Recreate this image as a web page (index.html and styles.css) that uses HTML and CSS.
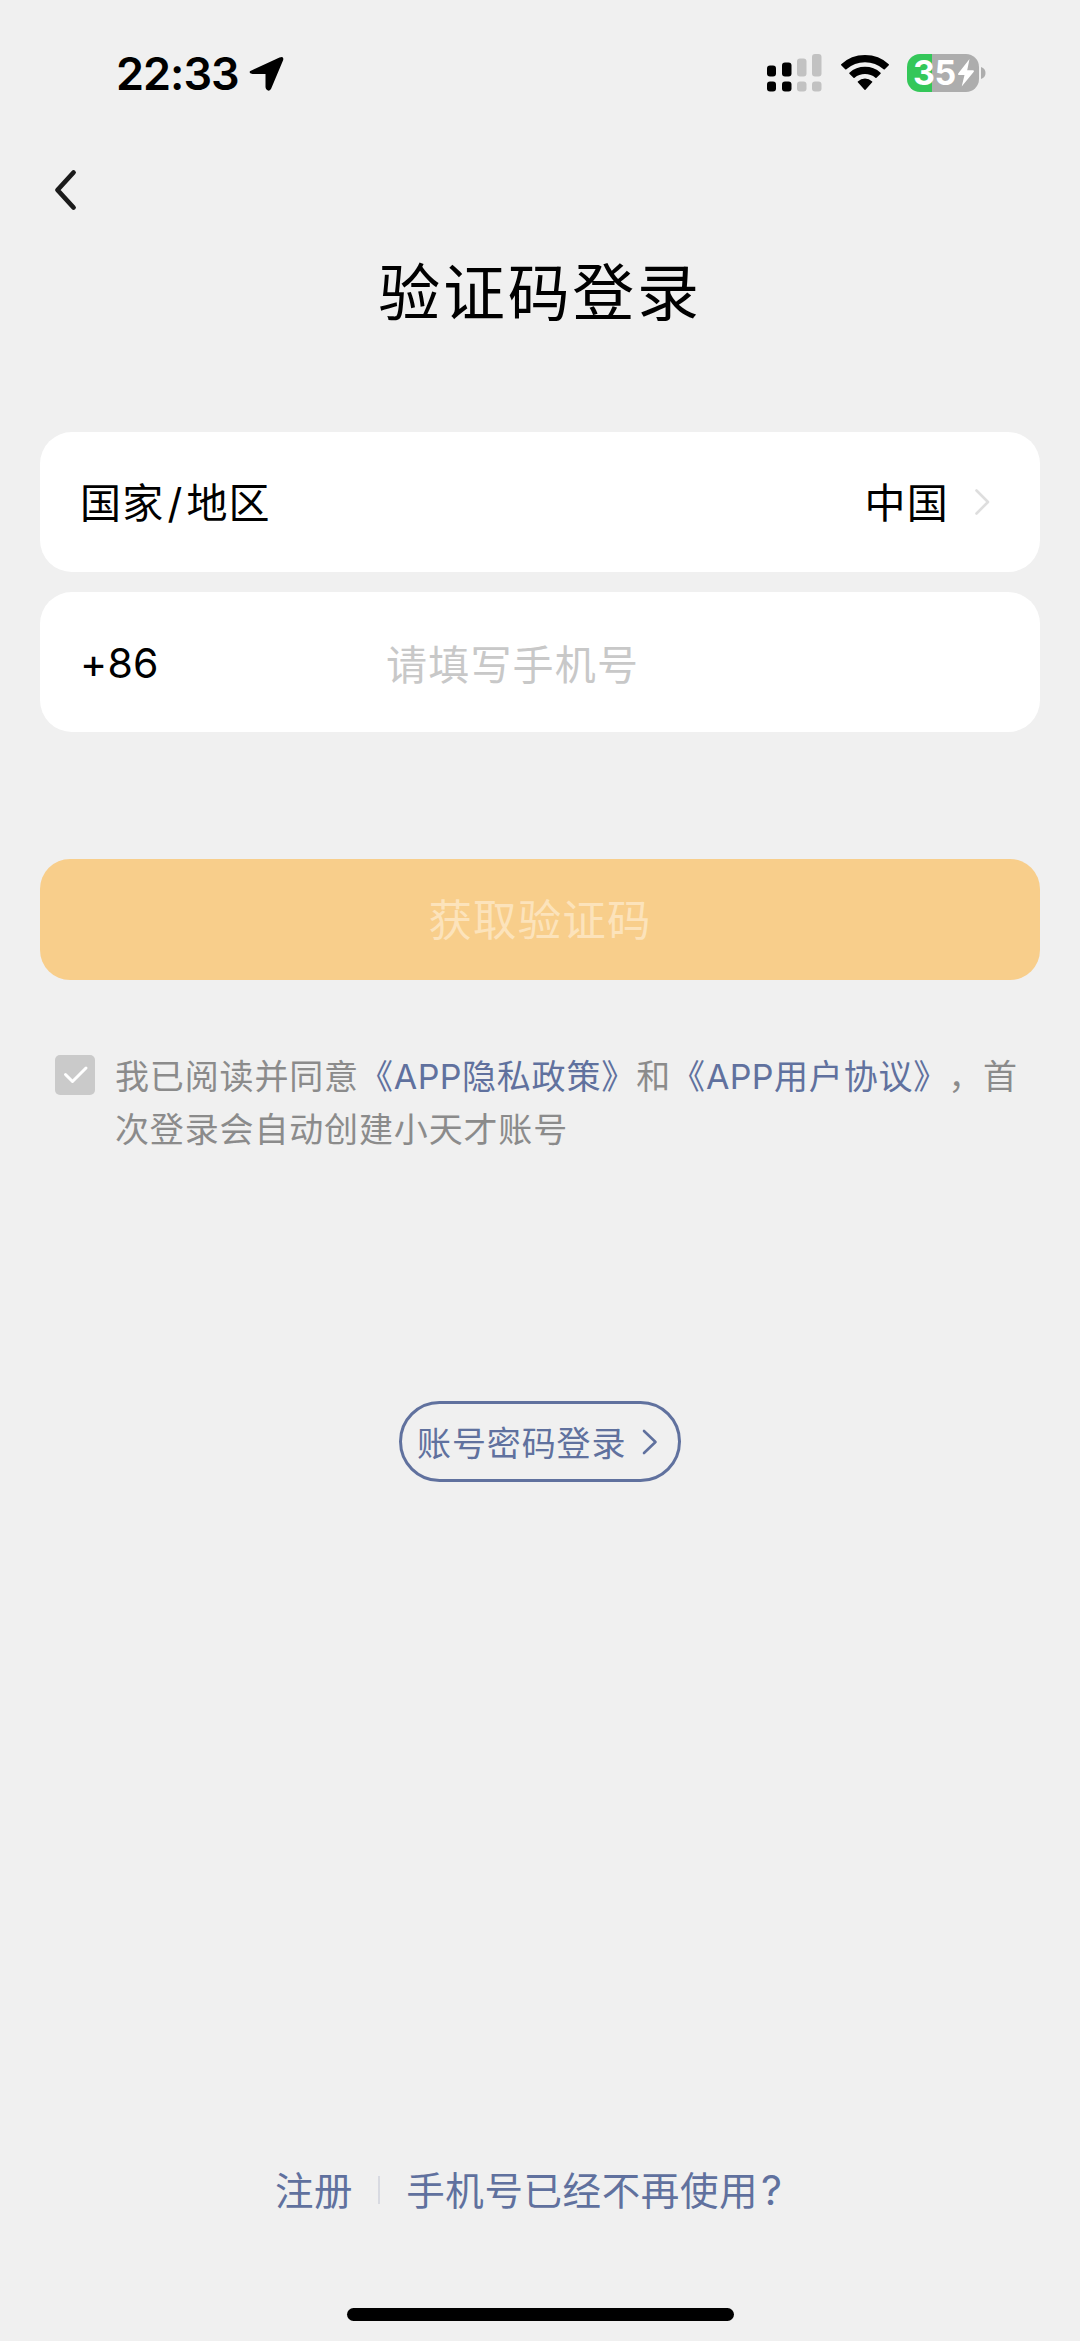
FILE: index.html
```html
<!DOCTYPE html>
<html lang="zh-CN">
<head>
<meta charset="utf-8">
<title>验证码登录</title>
<link rel="stylesheet" href="styles.css">
</head>
<body>
<div class="screen">
  <header class="status">
    <span class="time">22:33</span>
    <svg class="locate" width="36" height="36" viewBox="0 0 36 36"><path d="M3 15.200 30.500 2.600Q35 .8 34.200 5L22 34Q19.800 37 17.500 34.500Q16.500 33.400 16.500 32V19H3.500Q.5 18.500 .5 17Q.8 16 3 15.200Z"/></svg>
    <div class="indicators">
      <svg width="56" height="40" viewBox="0 0 56 40">
        <g><rect x="1" y="12.500" width="9" height="11" rx="3"/><rect x="1" y="28.500" width="9" height="10" rx="3"/><rect x="16" y="9.500" width="9.500" height="14" rx="3"/><rect x="16" y="28.500" width="9.500" height="10" rx="3"/></g>
        <g fill="#c2c2c2"><rect x="31" y="5.500" width="9.500" height="18" rx="3"/><rect x="31" y="28.500" width="9.500" height="10" rx="3"/><rect x="46" y="1" width="9.500" height="22.500" rx="3"/><rect x="46" y="28.500" width="9.500" height="10" rx="3"/></g>
      </svg>
      <svg class="wifi" width="50" height="40" viewBox="0 0 50 40"><path d="M1.200 11.200Q11 2 25 2T48.800 11.200Q49.200 11.700 48.800 12.200L44.800 16.300Q44.200 16.800 43.600 16.300Q35.500 9.300 25 9.300T6.400 16.300Q5.800 16.800 5.200 16.300L1.200 12.200Q.8 11.700 1.200 11.200ZM9.400 19.700Q16 13.800 25 13.800T40.600 19.700Q41 20.200 40.600 20.700L36.500 24.700Q36 25.200 35.400 24.700Q31 21.100 25 21.100T14.600 24.700Q14 25.200 13.500 24.700L9.400 20.700Q9 20.200 9.400 19.700ZM17.800 28.400Q21 25.600 25 25.600T32.200 28.400Q32.600 28.800 32.200 29.300L25.500 36.800Q25 37.300 24.500 36.800L17.800 29.300Q17.400 28.800 17.800 28.400Z"/></svg>
      <div class="battery">
        <span class="level">35</span>
        <svg width="18" height="30" viewBox="0 0 18 30"><path d="M12.500 1 1.200 15.500Q.5 17 2 17H7.500L4.700 28.500 16.800 13.800Q17.500 12.300 16 12.300H10.200Z" fill="#fff"/></svg>
      </div>
      <svg class="nub" width="5" height="12" viewBox="0 0 5 12"><path d="M0 0Q4.500 1.500 4.500 6T0 12Z" fill="#adadad"/></svg>
    </div>
  </header>

  <nav class="nav">
    <svg width="28" height="44" viewBox="0 0 28 44"><path d="M22.500 4.500 6.500 22 22.500 39.500" fill="none" stroke="#1b1b1b" stroke-width="4.800" stroke-linecap="round" stroke-linejoin="round"/></svg>
  </nav>

  <h1 class="title">验证码登录</h1>

  <div class="card">
    <span class="label">国家<span class="slash">/</span>地区</span>
    <span class="country">中国</span>
    <svg width="16" height="28" viewBox="0 0 16 28"><path d="M1.500 2.500 13 14 1.500 25.500" fill="none" stroke="#dedede" stroke-width="2.600" stroke-linecap="round" stroke-linejoin="round"/></svg>
  </div>
  <div class="card phone">
    <span class="code">+86</span>
    <span class="placeholder">请填写手机号</span>
  </div>

  <div class="submit">获取验证码</div>

  <div class="terms">
    <svg class="check" width="40" height="40" viewBox="0 0 40 40"><rect width="40" height="40" rx="5" fill="#cacaca"/><path d="M10.500 19.500 17.500 26.500 31 13" fill="none" stroke="#fff" stroke-width="3" stroke-linecap="round" stroke-linejoin="round"/></svg>
    <p class="terms-text">我已阅读并同意<span class="link">《<span class="latin">APP</span>隐私政策》</span>和<span class="link">《<span class="latin">APP</span>用户协议》</span>，首<br>次登录会自动创建小天才账号</p>
  </div>

  <div class="password">
    <span>账号密码登录</span>
    <svg width="17" height="28" viewBox="0 0 17 28"><path d="M2 3 13.500 14 2 25" fill="none" stroke="#60719e" stroke-width="2.600" stroke-linecap="round" stroke-linejoin="round"/></svg>
  </div>

  <footer class="links">
    <span>注册</span>
    <i class="divider"></i>
    <span>手机号已经不再使用<span class="question">?</span></span>
  </footer>
  <div class="home"></div>
</div>
</body>
</html>
```
FILE: styles.css
```css
body {
  margin: 0;
  background: #f0f0f0;
  color: #000;
  font-family: Inter, "Noto Sans CJK SC", sans-serif;
  text-spacing-trim: space-all;
}
svg { display: block; flex: none; }
.screen {
  display: flex;
  flex-direction: column;
  width: 1080px;
  height: 2341px;
  white-space: nowrap;
}
.status {
  display: flex;
  align-items: center;
  height: 60px;
  padding: 43px 94px 0 116px;
}
.time {
  width: 126px;
  padding-top: 2px;
  font-size: 45px;
  font-weight: 600;
  line-height: 58px;
  letter-spacing: -1px;
}
.locate { margin-left: 7px; }
.indicators {
  display: flex;
  align-items: center;
  margin-left: auto;
}
.wifi { margin: 0 17px 0 18px; }
.battery {
  display: flex;
  align-items: center;
  box-sizing: border-box;
  width: 72px;
  height: 38px;
  padding-left: 6px;
  border-radius: 13px;
  background: linear-gradient(to right, #34c759 25px, #adadad 25px);
}
.level {
  width: 44px;
  color: #fff;
  font-size: 34px;
  font-weight: 700;
  line-height: 38px;
  letter-spacing: -0.5px;
}
.nub { margin-left: 2px; }
.nav { height: 44px; padding: 65px 0 0 51px; }
.title {
  height: 90px;
  margin: 37px 0 0;
  font-size: 62px;
  font-weight: 400;
  line-height: 90px;
  letter-spacing: 2.7px;
  text-align: center;
}
.card {
  display: flex;
  align-items: center;
  box-sizing: border-box;
  height: 140px;
  margin: 93px 40px 0;
  padding: 0 49px 0 40px;
  border-radius: 32px;
  background: #fff;
  font-size: 41px;
  letter-spacing: 1.200px;
}
.label,
.country { padding-bottom: 4px; }
.slash { margin: 0 3px; }
.country { margin-left: auto; margin-right: 26px; }
.phone { margin-top: 20px; }
.code { width: 306px; padding-top: 2px; letter-spacing: 0.300px; }
.placeholder { color: #c8c8c8; }
.submit {
  height: 119px;
  margin: 127px 40px 0;
  padding-top: 2px;
  border-radius: 30px;
  background: #f8ce8b;
  color: #fce3bb;
  font-size: 43.500px;
  line-height: 119px;
  letter-spacing: 1.100px;
  text-align: center;
}
.terms {
  display: flex;
  align-items: flex-start;
  height: 110px;
  margin: 70px 0 0 55px;
}
.check { margin-top: 5px; }
.terms-text {
  margin: 0 0 0 20px;
  color: #8b8b8b;
  font-size: 34px;
  line-height: 53px;
  letter-spacing: 0.850px;
}
.link { color: #60719e; }
.latin { letter-spacing: 0.400px; }
.password {
  display: flex;
  align-items: center;
  box-sizing: border-box;
  width: 282px;
  height: 81px;
  margin: 241px auto 0;
  padding-left: 15px;
  border: 3px solid #60719e;
  border-radius: 41px;
  color: #60719e;
  font-size: 34px;
  letter-spacing: 0.900px;
}
.password svg { margin-left: 16px; }
.links {
  display: flex;
  align-items: center;
  height: 60px;
  margin: 676px 0 0 275px;
  color: #60719e;
  font-size: 38.500px;
  letter-spacing: 0.600px;
}
.divider {
  width: 2px;
  height: 28px;
  margin: 4px 26px 0 25px;
  background: #d8dae1;
}
.question { margin-left: 3px; font-size: 41px; }
.home {
  width: 387px;
  height: 13px;
  margin: 90px auto 0;
  border-radius: 7px;
  background: #000;
}
```
